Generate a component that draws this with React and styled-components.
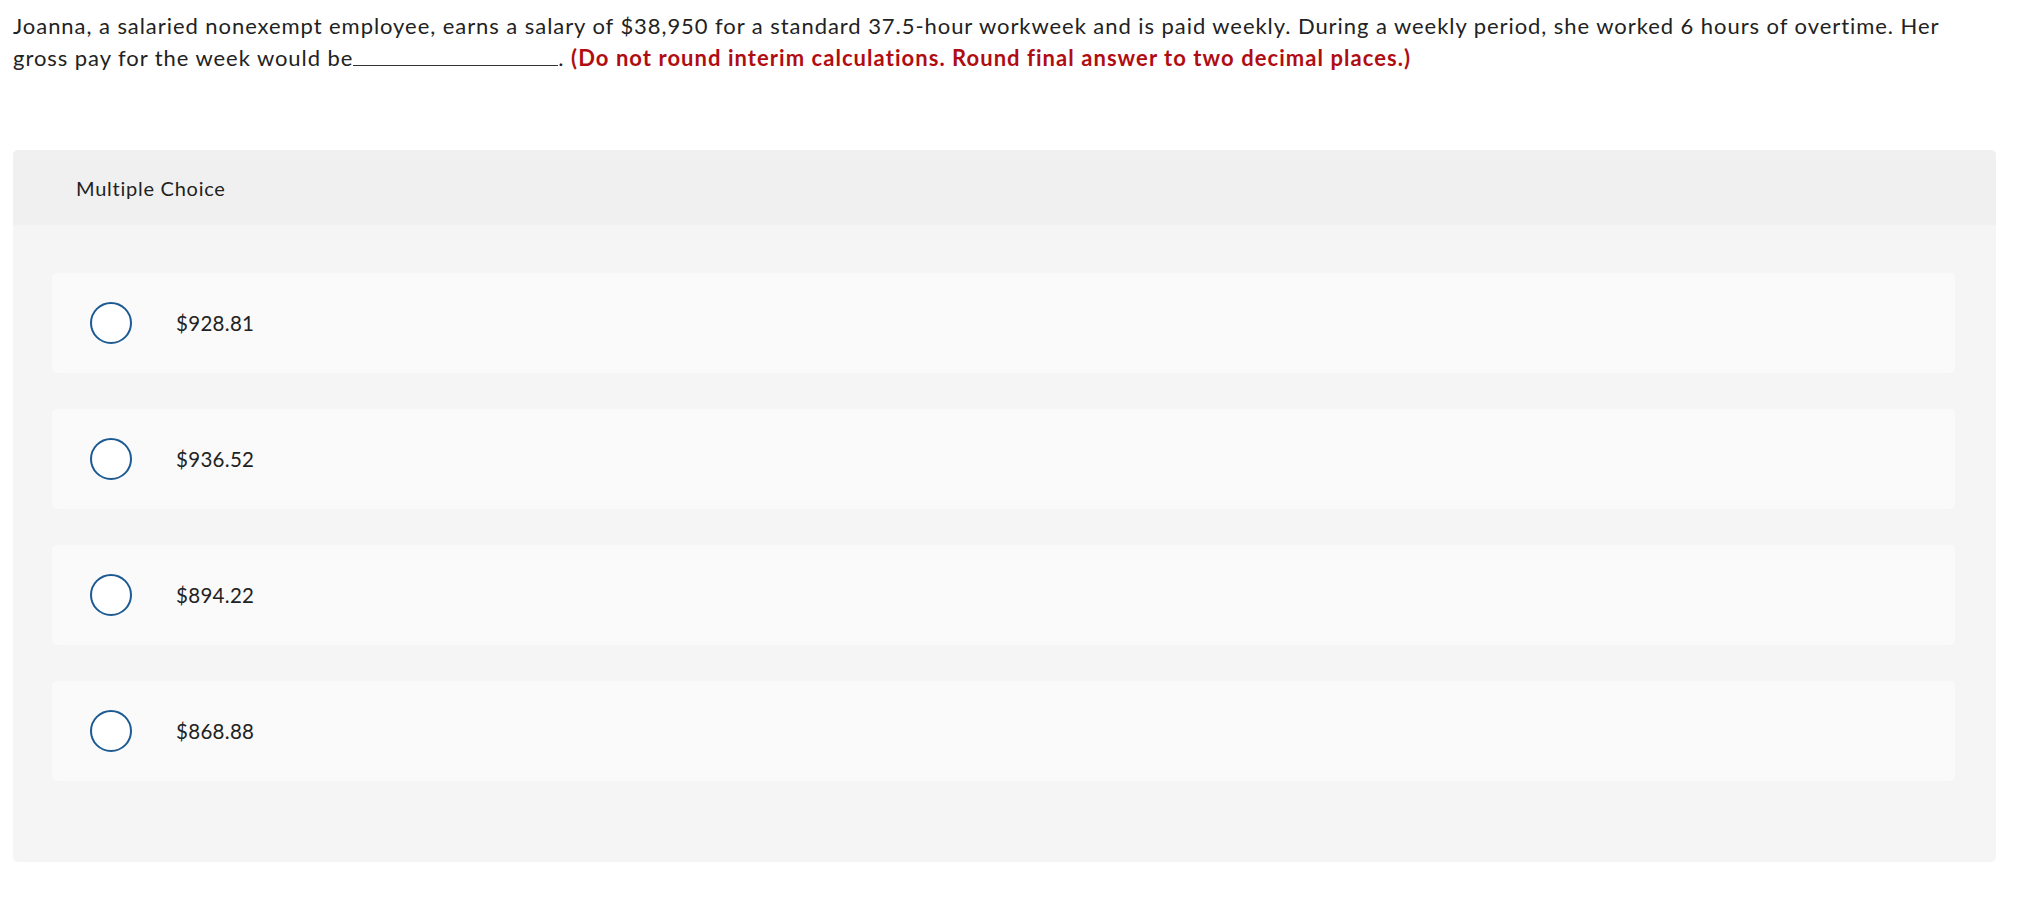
import React from 'react';
import styled, { createGlobalStyle } from 'styled-components';

const GlobalStyle = createGlobalStyle`
  body {
    margin: 0;
    background: #fff;
    font-family: Lato, "Liberation Sans", sans-serif;
    color: #222;
  }
`;

const Page = styled.main`
  width: 1983px;
  padding: 10px 0 0 13px;
`;

const Question = styled.p`
  margin: 0;
  max-width: 1960px;
  font-size: 22px;
  line-height: 32px;
  letter-spacing: 0.94px;
  color: #222;
`;

const Blank = styled.span`
  display: inline-block;
  width: 205px;
  border-bottom: 1px solid #333;
`;

const Hint = styled.strong`
  color: #b00d12;
  font-weight: 700;
  letter-spacing: 1.05px;
`;

const Panel = styled.section`
  margin-top: 76px;
  border-radius: 5px;
  overflow: hidden;
  background: #f5f5f5;
`;

const PanelHeader = styled.header`
  height: 75px;
  display: flex;
  align-items: center;
  padding-left: 63px;
  background: #f0f0f0;
  font-size: 20px;
  letter-spacing: 0.75px;
  color: #222;
`;

const Choices = styled.div`
  display: flex;
  flex-direction: column;
  gap: 36px;
  padding: 48px 41px 81px 39px;
`;

const Choice = styled.label`
  height: 100px;
  display: flex;
  align-items: center;
  gap: 44px;
  padding-left: 38px;
  background: #fafafa;
  border-radius: 5px;
  cursor: pointer;
`;

const Radio = styled.span`
  width: 42px;
  height: 42px;
  box-sizing: border-box;
  border-radius: 50%;
  border: 2px solid #1d5a93;
  background: #fff;
  flex-shrink: 0;
`;

const Amount = styled.span`
  font-size: 20.5px;
  letter-spacing: 0.3px;
  color: #222;
`;

const options = ['$928.81', '$936.52', '$894.22', '$868.88'];

export default function App() {
  return (
    <>
      <GlobalStyle />
      <Page>
        <Question>
          Joanna, a salaried nonexempt employee, earns a salary of $38,950 for a standard 37.5-hour workweek and is paid weekly. During a weekly period, she worked 6 hours of overtime. Her gross pay for the week would be<Blank />.{' '}
          <Hint>(Do not round interim calculations. Round final answer to two decimal places.)</Hint>
        </Question>
        <Panel>
          <PanelHeader>Multiple Choice</PanelHeader>
          <Choices>
            {options.map((o) => (
              <Choice key={o}>
                <Radio />
                <Amount>{o}</Amount>
              </Choice>
            ))}
          </Choices>
        </Panel>
      </Page>
    </>
  );
}
